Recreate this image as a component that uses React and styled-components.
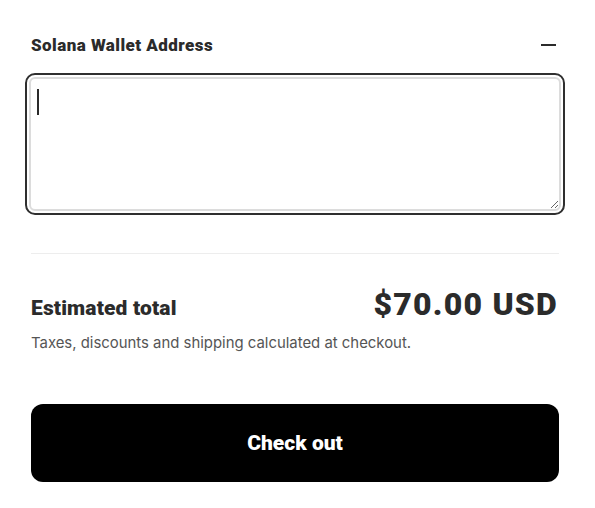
import React from "react";
import styled, { createGlobalStyle } from "styled-components";

const GlobalStyle = createGlobalStyle`
  body {
    margin: 0;
    background: #ffffff;
    font-family: "Inter", "Roboto", sans-serif;
  }
`;

const Page = styled.div`
  width: 528px;
  padding: 30px 36px 26px 31px;
`;

const FieldHeader = styled.div`
  display: flex;
  align-items: center;
  justify-content: space-between;
  height: 30px;
  margin-bottom: 17px;
`;

const FieldTitle = styled.h3`
  margin: 0;
  font-family: "Roboto", sans-serif;
  font-weight: 900;
  font-size: 17px;
  letter-spacing: 0.45px;
  color: #2b2b2b;
`;

const Collapse = styled.button`
  border: 0;
  background: none;
  padding: 0;
  width: 15px;
  height: 15px;
  margin-right: 3px;
  display: flex;
  align-items: center;
  cursor: pointer;
  &::before {
    content: "";
    display: block;
    width: 15px;
    height: 2px;
    background: #2b2b2b;
  }
`;

const InputWrap = styled.div`
  position: relative;
  margin: 0 -2px;
`;

const TextArea = styled.textarea`
  display: block;
  box-sizing: border-box;
  width: 100%;
  height: 134px;
  border: 2px solid #dcdcdc;
  border-radius: 6px;
  outline: 2px solid #2f2f2f;
  outline-offset: 2px;
  padding: 10px 8px;
  font-family: "Inter", sans-serif;
  font-size: 16px;
  color: #2b2b2b;
  background: #ffffff;
  resize: vertical;
`;

const Caret = styled.span`
  position: absolute;
  left: 8px;
  top: 12px;
  width: 2px;
  height: 26px;
  background: #2b2b2b;
`;

const Divider = styled.hr`
  border: 0;
  border-top: 1px solid #ededed;
  margin: 42px 0 0;
`;

const TotalRow = styled.div`
  display: flex;
  align-items: baseline;
  justify-content: space-between;
  margin-top: 31px;
`;

const TotalLabel = styled.span`
  font-family: "Roboto", sans-serif;
  font-weight: 900;
  font-size: 21px;
  letter-spacing: 0.15px;
  color: #2b2b2b;
`;

const TotalValue = styled.span`
  font-family: "Roboto", sans-serif;
  font-weight: 900;
  font-size: 32px;
  letter-spacing: 1.2px;
  color: #2b2b2b;
  margin-right: 1px;
`;

const Note = styled.p`
  margin: 11px 0 0;
  font-size: 14.9px;
  color: #555555;
`;

const CheckoutButton = styled.button`
  display: block;
  width: 100%;
  height: 78px;
  margin-top: 52px;
  border: 0;
  border-radius: 12px;
  background: #000000;
  color: #ffffff;
  font-family: "Roboto", sans-serif;
  font-weight: 900;
  font-size: 21px;
  letter-spacing: 0;
  cursor: pointer;
`;

export default function App() {
  return (
    <>
      <GlobalStyle />
      <Page>
        <FieldHeader>
          <FieldTitle>Solana Wallet Address</FieldTitle>
          <Collapse aria-label="Collapse" />
        </FieldHeader>
        <InputWrap>
          <TextArea aria-label="Solana Wallet Address" />
          <Caret />
        </InputWrap>
        <Divider />
        <TotalRow>
          <TotalLabel>Estimated total</TotalLabel>
          <TotalValue>$70.00 USD</TotalValue>
        </TotalRow>
        <Note>Taxes, discounts and shipping calculated at checkout.</Note>
        <CheckoutButton>Check out</CheckoutButton>
      </Page>
    </>
  );
}
